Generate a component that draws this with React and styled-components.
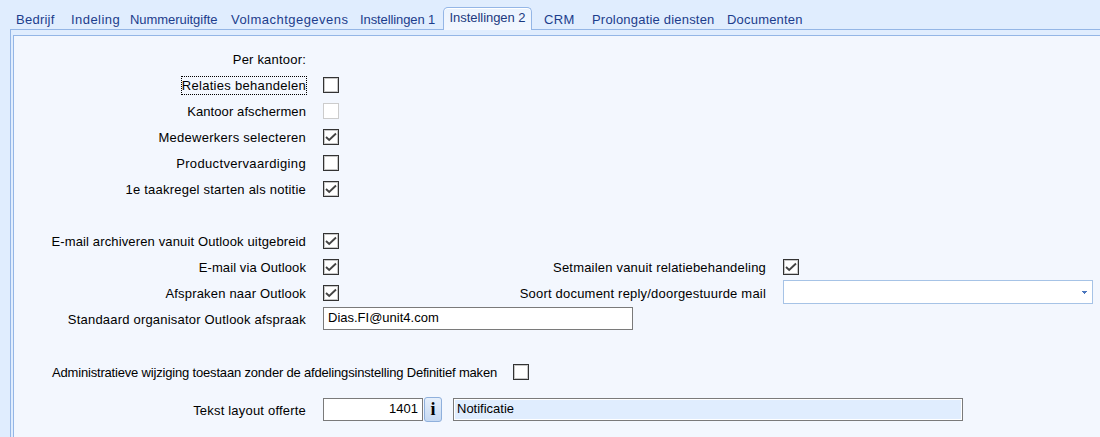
import React from "react";
import styled, { createGlobalStyle } from "styled-components";

const GlobalStyle = createGlobalStyle`
  html, body {
    margin: 0;
    padding: 0;
    height: 437px;
    overflow: hidden;
    background: #e0edfe;
    font-family: "Liberation Sans", Arial, sans-serif;
    font-size: 13px;
    color: #000;
  }
`;

const Page = styled.div`
  height: 437px;
  display: flex;
  flex-direction: column;
  overflow: hidden;
`;

const TabBar = styled.div`
  height: 29px;
  padding: 7px 0 0 16px;
  box-sizing: border-box;
  display: flex;
  align-items: flex-start;
`;

const Tab = styled.div`
  width: ${({ $width }) => $width}px;
  box-sizing: border-box;
  padding-top: 5px;
  white-space: nowrap;
  color: #1c3d8c;
  letter-spacing: ${({ $track }) => $track}px;
`;

const ActiveTab = styled.div`
  width: 89px;
  height: 23px;
  margin-right: 12px;
  box-sizing: border-box;
  padding-top: 2px;
  text-align: center;
  white-space: nowrap;
  color: #1b3a80;
  letter-spacing: ${({ $track }) => $track}px;
  background: linear-gradient(#eaf3fe, #f3f7fe);
  border: 1px solid #94b6e6;
  border-bottom: none;
  border-radius: 5px 5px 0 0;
  box-shadow: inset 0 1px 0 #fff;
  position: relative;
  z-index: 1;
`;

const OuterPanel = styled.div`
  flex: 1;
  margin-left: 10px;
  padding: 5px 0 0 2px;
  border-top: 1px solid #94b6e6;
  border-left: 1px solid #94b6e6;
  display: flex;
`;

const InnerPanel = styled.div`
  flex: 1;
  background: #f3f7fe;
  border-top: 1px solid #94b6e6;
  border-left: 1px solid #94b6e6;
  padding: 10px 0 0;
`;

const Row = styled.div`
  height: 26px;
  display: flex;
  align-items: center;
  margin-top: ${({ $top }) => $top || 0}px;
`;

const Label = styled.div`
  width: 306px;
  margin-left: -14px;
  flex-shrink: 0;
  text-align: right;
  white-space: nowrap;
  letter-spacing: ${({ $track }) => $track ?? 0.2}px;
`;

const FocusText = styled.span`
  outline: 1px dotted #000;
  padding: 1px 0;
`;

const WideLabel = styled.div`
  width: 444px;
  margin-left: 38px;
  flex-shrink: 0;
  white-space: nowrap;
  letter-spacing: -0.18px;
`;

const RightLabel = styled.div`
  width: 427px;
  flex-shrink: 0;
  text-align: right;
  white-space: nowrap;
  letter-spacing: 0.2px;
`;

const Box = styled.div`
  width: 16px;
  height: 16px;
  box-sizing: border-box;
  flex-shrink: 0;
  margin-left: 17px;
  background: #fff;
  border: 1px solid ${({ $disabled }) => ($disabled ? "#cccccc" : "#333333")};
  box-shadow: ${({ $disabled }) => ($disabled ? "none" : "inset 0 0 0 1px rgba(0, 0, 0, 0.22)")};
  display: flex;
  align-items: center;
  justify-content: center;
`;

const Input = styled.div`
  height: 23px;
  width: ${({ $width }) => $width}px;
  margin: -2px 0 0 17px;
  box-sizing: border-box;
  flex-shrink: 0;
  background: #fff;
  border: 1px solid #7a7a7a;
  padding: 0 4px;
  line-height: 20px;
  text-align: ${({ $right }) => ($right ? "right" : "left")};
`;

const Select = styled.div`
  height: 24px;
  width: 310px;
  margin: -2px 0 0 17px;
  box-sizing: border-box;
  background: #fff;
  border: 1px solid #a6c3e6;
  display: flex;
  align-items: center;
  justify-content: flex-end;
  padding-right: 5px;
`;

const InfoButton = styled.div`
  width: 18px;
  height: 25px;
  margin: -1px 0 0 1px;
  box-sizing: border-box;
  flex-shrink: 0;
  border: 1px solid #8fb0dc;
  border-radius: 3px;
  background: linear-gradient(#e6effb, #c6d9f2);
  font-family: "Liberation Serif", serif;
  font-weight: bold;
  font-size: 18px;
  line-height: 23px;
  text-align: center;
`;

const ReadOnly = styled.div`
  height: 23px;
  width: 510px;
  margin: -2px 0 0 11px;
  box-sizing: border-box;
  flex-shrink: 0;
  background: #e0edfe;
  border: 1px solid #7a7a7a;
  box-shadow: inset 0 0 0 1px #fff;
  padding: 0 3px;
  line-height: 20px;
`;

const Check = ({ checked, disabled }) => (
  <Box $disabled={disabled}>
    {checked && (
      <svg width="12" height="10" viewBox="0 0 12 10">
        <path d="M1 5 L4.2 8 L11 1.5" fill="none" stroke="#444" strokeWidth="1.9" />
      </svg>
    )}
  </Box>
);

const tabs = [
  { label: "Bedrijf", width: 55, track: 0.25 },
  { label: "Indeling", width: 59, track: 0.45 },
  { label: "Nummeruitgifte", width: 101, track: -0.05 },
  { label: "Volmachtgegevens", width: 129, track: 0.47 },
  { label: "Instellingen 1", width: 83, track: -0.1 },
  { label: "Instellingen 2", active: true, track: -0.05 },
  { label: "CRM", width: 48, track: 0.4 },
  { label: "Prolongatie diensten", width: 135, track: 0.2 },
  { label: "Documenten", width: 84, track: 0.2 },
];

const App = () => (
  <Page>
    <GlobalStyle />
    <TabBar>
      {tabs.map((tab) =>
        tab.active ? (
          <ActiveTab key={tab.label} $track={tab.track}>
            {tab.label}
          </ActiveTab>
        ) : (
          <Tab key={tab.label} $width={tab.width} $track={tab.track}>
            {tab.label}
          </Tab>
        )
      )}
    </TabBar>
    <OuterPanel>
      <InnerPanel>
        <Row>
          <Label>Per kantoor:</Label>
        </Row>
        <Row>
          <Label $track={0.3}>
            <FocusText>Relaties behandelen</FocusText>
          </Label>
          <Check />
        </Row>
        <Row>
          <Label $track={0.1}>Kantoor afschermen</Label>
          <Check disabled />
        </Row>
        <Row>
          <Label $track={0.27}>Medewerkers selecteren</Label>
          <Check checked />
        </Row>
        <Row>
          <Label $track={0.35}>Productvervaardiging</Label>
          <Check />
        </Row>
        <Row>
          <Label $track={0.22}>1e taakregel starten als notitie</Label>
          <Check checked />
        </Row>
        <Row $top={26}>
          <Label $track={0.14}>E-mail archiveren vanuit Outlook uitgebreid</Label>
          <Check checked />
        </Row>
        <Row>
          <Label $track={0.1}>E-mail via Outlook</Label>
          <Check checked />
          <RightLabel>Setmailen vanuit relatiebehandeling</RightLabel>
          <Check checked />
        </Row>
        <Row>
          <Label $track={0.18}>Afspraken naar Outlook</Label>
          <Check checked />
          <RightLabel>Soort document reply/doorgestuurde mail</RightLabel>
          <Select>
            <svg width="5" height="3" viewBox="0 0 5 3">
              <path d="M0 0 H5 V1 H4 V2 H3 V3 H2 V2 H1 V1 H0 Z" fill="#4a76bd" />
            </svg>
          </Select>
        </Row>
        <Row>
          <Label>Standaard organisator Outlook afspraak</Label>
          <Input $width={310}>Dias.FI@unit4.com</Input>
        </Row>
        <Row $top={27}>
          <WideLabel>Administratieve wijziging toestaan zonder de afdelingsinstelling Definitief maken</WideLabel>
          <Check />
        </Row>
        <Row $top={12}>
          <Label>Tekst layout offerte</Label>
          <Input $width={100} $right>
            1401
          </Input>
          <InfoButton>i</InfoButton>
          <ReadOnly>Notificatie</ReadOnly>
        </Row>
      </InnerPanel>
    </OuterPanel>
  </Page>
);

export default App;
